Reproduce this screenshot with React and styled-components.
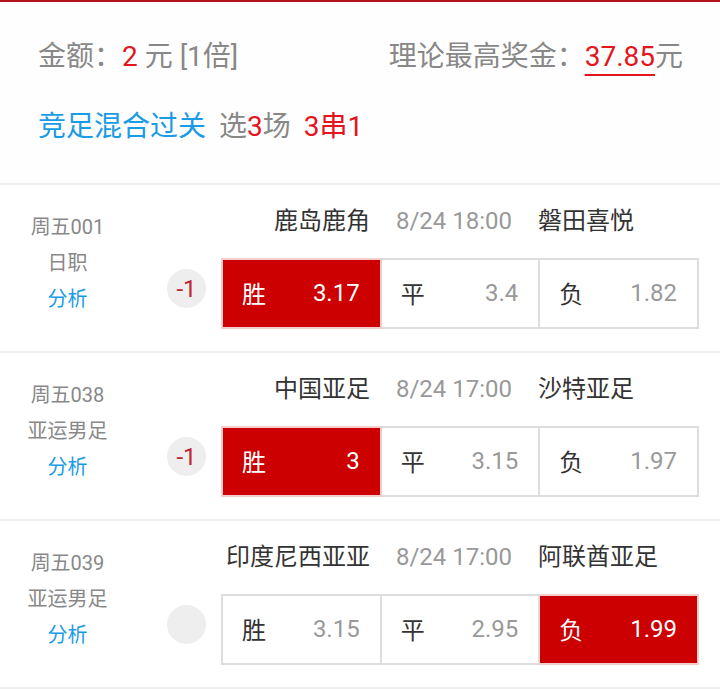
import React from "react"
import styled, { createGlobalStyle } from "styled-components"

const GlobalStyle = createGlobalStyle`
  html, body {
    margin: 0;
    padding: 0;
    background: #fff;
  }
  body {
    font-family: Roboto, "Noto Sans CJK SC", "Noto Sans", sans-serif;
  }
`

const Page = styled.div`
  width: 720px;
  min-height: 689px;
  background: #fff;
  border-top: 2px solid #b3121c;
  box-sizing: border-box;
  border-bottom: 2px solid #fdeee5;
`

const Summary = styled.section`
  padding: 35px 37px 36px 38px;
  border-bottom: 2px solid #eeeeee;
  background: #fefefe;
`

const SummaryLine = styled.div`
  display: flex;
  align-items: center;
  justify-content: ${(p) => (p.$spread ? "space-between" : "flex-start")};
  gap: 13px;
  margin-top: ${(p) => (p.$first ? "0" : "30px")};
  height: 40px;
  font-size: 28px;
  line-height: 40px;
  color: #888;
`

const Red = styled.span`
  color: #e4151c;
`

const Prize = styled.span`
  color: #e4151c;
  text-decoration: underline;
  text-decoration-thickness: 2px;
  text-underline-offset: 8px;
`

const Blue = styled.span`
  color: #1a9be6;
`

const Match = styled.div`
  display: flex;
  height: 166px;
  border-bottom: 2px solid #eeeeee;
  box-sizing: content-box;
`

const MetaCol = styled.div`
  width: 135px;
  padding-top: 24px;
  display: flex;
  flex-direction: column;
  align-items: center;
  font-size: 20px;
  line-height: 36px;
  color: #888;
`

const Analyse = styled.span`
  color: #1a9be6;
`

const MatchBody = styled.div`
  flex: 1;
  padding-top: 18px;
  padding-left: 32px;
`

const TeamLine = styled.div`
  display: grid;
  grid-template-columns: 1fr auto 1fr;
  gap: 26px;
  width: 494px;
  margin-left: 40px;
  font-size: 24px;
  line-height: 36px;
  color: #333;
`

const Home = styled.span`
  text-align: right;
`

const Time = styled.span`
  color: #999;
`

const OddsRow = styled.div`
  display: flex;
  align-items: flex-start;
  margin-top: 19px;
`

const Handicap = styled.div`
  width: 39px;
  height: 39px;
  margin-top: 11px;
  margin-right: 15px;
  border-radius: 50%;
  background: #eeeeee;
  display: flex;
  align-items: center;
  justify-content: center;
  font-size: 24px;
  color: #c1272d;
`

const Odds = styled.div`
  display: flex;
  width: 478px;
`

const Cell = styled.div`
  flex: 1;
  height: 71px;
  box-sizing: border-box;
  border: 2px solid ${(p) => (p.$on ? "#f3cccc" : "#dddddd")};
  background: ${(p) => (p.$on ? "#cc0000" : "#fff")};
  display: flex;
  align-items: center;
  justify-content: space-between;
  padding: 0 20px 2px 19px;
  font-size: 24px;
  color: ${(p) => (p.$on ? "#fff" : "#333")};

  & + & {
    border-left: none;
  }
`

const Odd = styled.span`
  color: ${(p) => (p.$on ? "#fff" : "#999")};
`

const matches = [
  {
    no: "周五001",
    league: "日职",
    home: "鹿岛鹿角",
    time: "8/24 18:00",
    away: "磐田喜悦",
    handicap: "-1",
    odds: ["3.17", "3.4", "1.82"],
    pick: 0,
  },
  {
    no: "周五038",
    league: "亚运男足",
    home: "中国亚足",
    time: "8/24 17:00",
    away: "沙特亚足",
    handicap: "-1",
    odds: ["3", "3.15", "1.97"],
    pick: 0,
  },
  {
    no: "周五039",
    league: "亚运男足",
    home: "印度尼西亚亚",
    time: "8/24 17:00",
    away: "阿联酋亚足",
    handicap: "",
    odds: ["3.15", "2.95", "1.99"],
    pick: 2,
  },
]

const labels = ["胜", "平", "负"]

export default function App() {
  return (
    <Page>
      <GlobalStyle />
      <Summary>
        <SummaryLine $first $spread>
          <span>
            金额：<Red>2</Red> 元 [1倍]
          </span>
          <span>
            理论最高奖金：<Prize>37.85</Prize>元
          </span>
        </SummaryLine>
        <SummaryLine>
          <Blue>竞足混合过关</Blue>
          <span>
            选<Red>3</Red>场
          </span>
          <Red>3串1</Red>
        </SummaryLine>
      </Summary>

      {matches.map((m) => (
        <Match key={m.no}>
          <MetaCol>
            <span>{m.no}</span>
            <span>{m.league}</span>
            <Analyse>分析</Analyse>
          </MetaCol>
          <MatchBody>
            <TeamLine>
              <Home>{m.home}</Home>
              <Time>{m.time}</Time>
              <span>{m.away}</span>
            </TeamLine>
            <OddsRow>
              <Handicap>{m.handicap}</Handicap>
              <Odds>
                {m.odds.map((o, i) => (
                  <Cell key={i} $on={m.pick === i}>
                    <span>{labels[i]}</span>
                    <Odd $on={m.pick === i}>{o}</Odd>
                  </Cell>
                ))}
              </Odds>
            </OddsRow>
          </MatchBody>
        </Match>
      ))}
    </Page>
  )
}
